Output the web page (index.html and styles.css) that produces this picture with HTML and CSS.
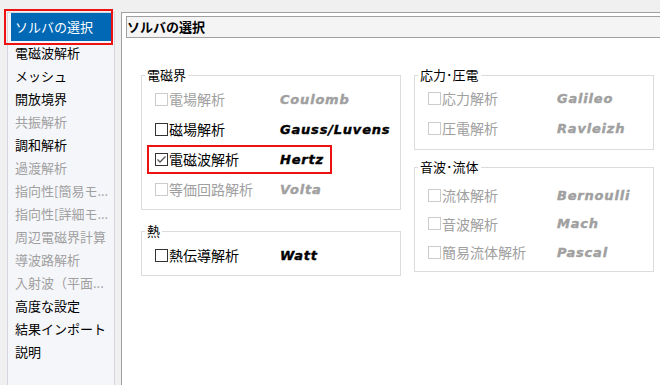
FILE: index.html
```html
<!DOCTYPE html>
<html lang="ja">

<head>
    <meta charset="UTF-8">
    <meta name="viewport" content="width=device-width, initial-scale=1.0">
    <title>ソルバの選択</title>
    <link rel="stylesheet" href="styles.css">
</head>

<body>
    <div class="window">
        <nav class="sidebar">
            <div class="menu-item selected">ソルバの選択</div>
            <div class="menu-item">電磁波解析</div>
            <div class="menu-item">メッシュ</div>
            <div class="menu-item">開放境界</div>
            <div class="menu-item disabled">共振解析</div>
            <div class="menu-item">調和解析</div>
            <div class="menu-item disabled">過渡解析</div>
            <div class="menu-item disabled">指向性[簡易モ...</div>
            <div class="menu-item disabled">指向性[詳細モ...</div>
            <div class="menu-item disabled">周辺電磁界計算</div>
            <div class="menu-item disabled">導波路解析</div>
            <div class="menu-item disabled">入射波（平面...</div>
            <div class="menu-item">高度な設定</div>
            <div class="menu-item">結果インポート</div>
            <div class="menu-item">説明</div>
        </nav>

        <main class="content">
            <div class="title-bar">ソルバの選択</div>

            <div class="groups">
                <div class="column column-left">
                    <fieldset class="group group-em">
                        <legend>電磁界</legend>
                        <div class="option disabled">
                            <span class="check"></span><span class="label">電場解析</span><span class="solver">Coulomb</span>
                        </div>
                        <div class="option">
                            <span class="check"></span><span class="label">磁場解析</span><span class="solver">Gauss/Luvens</span>
                        </div>
                        <div class="option highlighted">
                            <span class="check">
                                <svg width="11" height="11" viewBox="0 0 11 11">
                                    <polyline points="1.5,5.5 4,8 9.5,2.5" fill="none" stroke="#555" stroke-width="1.3" />
                                </svg>
                            </span><span class="label">電磁波解析</span><span class="solver">Hertz</span>
                        </div>
                        <div class="option disabled">
                            <span class="check"></span><span class="label">等価回路解析</span><span class="solver">Volta</span>
                        </div>
                    </fieldset>

                    <fieldset class="group group-heat">
                        <legend>熱</legend>
                        <div class="option">
                            <span class="check"></span><span class="label">熱伝導解析</span><span class="solver">Watt</span>
                        </div>
                    </fieldset>
                </div>

                <div class="column column-right">
                    <fieldset class="group group-stress">
                        <legend>応力･圧電</legend>
                        <div class="option disabled">
                            <span class="check"></span><span class="label">応力解析</span><span class="solver">Galileo</span>
                        </div>
                        <div class="option disabled">
                            <span class="check"></span><span class="label">圧電解析</span><span class="solver">Ravleizh</span>
                        </div>
                    </fieldset>

                    <fieldset class="group group-fluid">
                        <legend>音波･流体</legend>
                        <div class="option disabled">
                            <span class="check"></span><span class="label">流体解析</span><span class="solver">Bernoulli</span>
                        </div>
                        <div class="option disabled">
                            <span class="check"></span><span class="label">音波解析</span><span class="solver">Mach</span>
                        </div>
                        <div class="option disabled">
                            <span class="check"></span><span class="label">簡易流体解析</span><span class="solver">Pascal</span>
                        </div>
                    </fieldset>
                </div>
            </div>
        </main>
    </div>
</body>

</html>
```

FILE: styles.css
```css
:root {
    --fondo: #f0f0f0;
    --menu-fondo: #f5f6fa;
    --seleccion: #0068b4;
    --marco: #a0a0a0;
    --grupo: #dcdcdc;
    --deshabilitado: #a0a0a0;
    --resaltado: #ee1111;
}

body {
    margin: 0;
    background-color: var(--fondo);
    font-family: "Noto Sans CJK JP", sans-serif;
    font-size: 13px;
    color: #000;
    overflow: hidden;
}

.window {
    display: flex;
    height: 385px;
    padding-top: 12px;
    box-sizing: border-box;
}

/* Left menu */
.sidebar {
    width: 108px;
    margin-left: 7px;
    padding: 0 3px;
    box-sizing: border-box;
    border: 1px solid #d6d6de;
    border-bottom: none;
    background-color: var(--menu-fondo);
}

.menu-item {
    height: 23px;
    line-height: 23px;
    padding-left: 4px;
    white-space: nowrap;
    overflow: hidden;
}

.menu-item.disabled {
    color: var(--deshabilitado);
}

.menu-item.selected {
    position: relative;
    height: 28px;
    line-height: 28px;
    overflow: visible;
    background-color: var(--seleccion);
    color: #fff;
}

/* red annotation box */
.menu-item.selected::after {
    content: "";
    position: absolute;
    left: -7px;
    right: -2px;
    top: -4px;
    bottom: -4px;
    border: 2px solid var(--resaltado);
}

/* Right panel */
.content {
    flex: 1;
    margin-left: 6px;
    margin-right: -10px;
    border-left: 1px solid var(--marco);
    border-top: 1px solid var(--marco);
    background-color: #fff;
}

.title-bar {
    height: 22px;
    margin: 3px 0 0 4px;
    box-sizing: border-box;
    border: 1px solid var(--marco);
    border-right: none;
    background-color: #f4f4f4;
    font-weight: bold;
    line-height: 20px;
}

.groups {
    display: flex;
    gap: 13px;
    padding: 29px 0 0 19px;
}

.column {
    display: flex;
    flex-direction: column;
}

.column-left {
    width: 260px;
}

.column-right {
    width: 240px;
}

.group {
    margin: 0;
    padding: 1px 0 5px 0;
    min-width: 0;
    border: 1px solid var(--grupo);
}

.group legend {
    margin-left: 3px;
    padding: 0 2px;
    line-height: 16px;
}

.group-heat {
    margin-top: 13px;
}

.group-stress {
    padding-top: 0;
    padding-bottom: 6px;
}

.group-fluid {
    margin-top: 9px;
    padding-top: 6px;
    padding-bottom: 4px;
}

.option {
    position: relative;
    display: flex;
    align-items: center;
    height: 30px;
    padding-left: 13px;
    white-space: nowrap;
}

.group-fluid .option {
    height: 28.5px;
}

.check {
    display: flex;
    align-items: center;
    justify-content: center;
    width: 13px;
    height: 13px;
    margin-right: 1px;
    box-sizing: border-box;
    border: 1px solid #333;
    background-color: #fff;
}

.label {
    width: 111px;
    font-size: 14px;
}

.column-right .label {
    width: 115px;
}

.solver {
    font-family: "DejaVu Sans", sans-serif;
    font-weight: bold;
    font-style: italic;
    letter-spacing: 0.8px;
    -webkit-text-stroke: 0.4px currentColor;
}

.option.disabled {
    color: var(--deshabilitado);
}

.option.disabled .check {
    border-color: #cccccc;
}

/* red annotation box around the chosen solver */
.option.highlighted::after {
    content: "";
    position: absolute;
    left: 5px;
    top: 1px;
    width: 185px;
    bottom: 0;
    box-sizing: border-box;
    border: 2px solid var(--resaltado);
}
```
